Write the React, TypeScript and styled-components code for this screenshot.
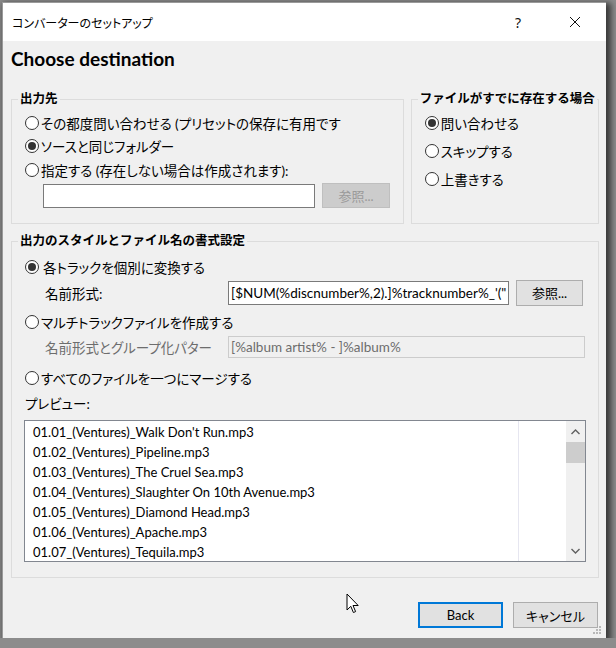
import React from 'react';
import styled, { createGlobalStyle } from 'styled-components';

const ui = `Lato, "Noto Sans CJK JP", sans-serif`;

const GlobalStyle = createGlobalStyle`
  html, body {
    margin: 0;
    padding: 0;
    background: #8c8c8c;
  }
  * {
    box-sizing: border-box;
  }
`;

const Window = styled.div`
  position: relative;
  margin: 2px 0 0 2px;
  width: 604px;
  height: 636px;
  display: flex;
  flex-direction: column;
  border-left: 1px solid #9a9a9a;
  border-top: 1px solid #9a9a9a;
  box-shadow: 3px 3px 6px 2px rgba(30, 30, 30, 0.75);
  font-family: ${ui};
  font-size: 13px;
  color: #000;
`;

const TitleBar = styled.div`
  height: 38px;
  flex: none;
  background: #fff;
  display: flex;
  align-items: center;
  padding: 0 8px 0 9px;
  font-size: 12px;
  font-feature-settings: 'palt';
`;

const Title = styled.div`
  flex: 1;
`;

const TitleButton = styled.div<{ $mr?: number }>`
  width: 46px;
  height: 38px;
  margin-right: ${(p) => p.$mr ?? 0}px;
  display: flex;
  align-items: center;
  justify-content: center;
  font-size: 14px;
  font-family: "Noto Sans", sans-serif;
  color: #111;
`;

const Body = styled.div`
  flex: 1;
  background: #f0f0f0;
  padding: 0 7px 0 8px;
  display: flex;
  flex-direction: column;
`;

const Heading = styled.h1`
  margin: 7px 0 0;
  height: 22px;
  line-height: 22px;
  font-size: 19px;
  font-weight: 700;
  font-family: Lato, sans-serif;
`;

const TopRow = styled.div`
  display: flex;
  gap: 7px;
  margin-top: 21px;
`;

const Group = styled.fieldset<{ $w?: number; $h: number; $mt?: number }>`
  margin: ${(p) => p.$mt ?? 0}px 0 0;
  padding: 0;
  width: ${(p) => (p.$w ? `${p.$w}px` : 'auto')};
  height: ${(p) => p.$h}px;
  min-width: 0;
  border: 1px solid #dcdcdc;
  display: flex;
  flex-direction: column;
`;

const Legend = styled.legend`
  margin-left: 6px;
  padding: 0 2px;
  font-size: 12.5px;
  line-height: 16px;
  font-weight: 700;
`;

const Content = styled.div<{ $pt: number }>`
  padding: ${(p) => p.$pt}px 13px 0 13px;
  display: flex;
  flex-direction: column;
  font-size: 13.5px;
  font-feature-settings: 'palt';
`;

const RadioRow = styled.label<{ $h: number; $mt?: number; $gap?: number }>`
  display: flex;
  align-items: center;
  gap: ${(p) => p.$gap ?? 2}px;
  height: ${(p) => p.$h}px;
  margin-top: ${(p) => p.$mt ?? 0}px;
  white-space: nowrap;
`;

const RadioCircle = styled.span<{ $on?: boolean }>`
  flex: none;
  width: 14px;
  height: 14px;
  border-radius: 50%;
  border: 1px solid #333;
  background: #fff;
  display: flex;
  align-items: center;
  justify-content: center;

  &::after {
    content: '';
    width: 8px;
    height: 8px;
    border-radius: 50%;
    background: ${(p) => (p.$on ? '#333' : 'transparent')};
  }
`;

const FieldRow = styled.div<{ $h: number; $mt?: number; $pl: number }>`
  display: flex;
  align-items: center;
  height: ${(p) => p.$h}px;
  margin-top: ${(p) => p.$mt ?? 0}px;
  padding-left: ${(p) => p.$pl}px;
  gap: 7px;
`;

const FieldLabel = styled.span<{ $disabled?: boolean }>`
  width: 176px;
  flex: none;
  white-space: nowrap;
  color: ${(p) => (p.$disabled ? '#6d6d6d' : '#000')};
`;

const TextBox = styled.div<{ $w?: number; $h: number; $disabled?: boolean }>`
  width: ${(p) => (p.$w ? `${p.$w}px` : 'auto')};
  flex: ${(p) => (p.$w ? 'none' : '1')};
  height: ${(p) => p.$h}px;
  border: 1px solid ${(p) => (p.$disabled ? '#cccccc' : '#7a7a7a')};
  background: ${(p) => (p.$disabled ? '#f0f0f0' : '#fff')};
  color: ${(p) => (p.$disabled ? '#6d6d6d' : '#000')};
  padding: 0 2px;
  display: flex;
  align-items: center;
  overflow: hidden;
  white-space: nowrap;
  font-family: Lato, sans-serif;
  font-size: 13.5px;
`;

const Button = styled.div<{ $w: number; $h: number; $disabled?: boolean; $focused?: boolean }>`
  width: ${(p) => p.$w}px;
  height: ${(p) => p.$h}px;
  flex: none;
  display: flex;
  align-items: center;
  justify-content: center;
  background: ${(p) => (p.$disabled ? '#cccccc' : '#e1e1e1')};
  border: ${(p) => (p.$focused ? '2px solid #0078d7' : `1px solid ${p.$disabled ? '#bfbfbf' : '#adadad'}`)};
  color: ${(p) => (p.$disabled ? '#9a9a9a' : '#000')};
  font-size: 13px;
`;

const PreviewLabel = styled.div`
  height: 16px;
  margin-top: 6px;
  line-height: 16px;
`;

const ListBox = styled.div`
  margin: 8px 0 0 -1px;
  height: 142px;
  width: 562px;
  border: 1px solid #828790;
  background: #fff;
  display: flex;
`;

const ListItems = styled.div`
  width: 494px;
  border-right: 1px solid #e6e6f0;
  padding: 1px 0 0 8px;
  overflow: hidden;
`;

const ListItem = styled.div`
  height: 20px;
  line-height: 20px;
  font-family: Lato, sans-serif;
  font-size: 13px;
  white-space: nowrap;
`;

const ListSpacer = styled.div`
  flex: 1;
`;

const ScrollBar = styled.div`
  width: 19px;
  background: #f0f0f0;
  display: flex;
  flex-direction: column;
  align-items: center;
`;

const ScrollArrow = styled.div`
  height: 21px;
  width: 100%;
  display: flex;
  align-items: center;
  justify-content: center;
`;

const ScrollThumb = styled.div`
  width: 100%;
  height: 21px;
  background: #cdcdcd;
`;

const ScrollTrack = styled.div`
  flex: 1;
`;

const Footer = styled.div`
  margin-top: 24px;
  display: flex;
  justify-content: flex-end;
  gap: 10px;
  padding-right: 1px;
  font-feature-settings: 'palt';
`;

const Cursor = styled.svg`
  position: absolute;
  left: 343px;
  top: 590px;
`;

const Grip = styled.svg`
  position: absolute;
  right: 5px;
  bottom: 4px;
`;

const tracks = [
  "01.01_(Ventures)_Walk Don't Run.mp3",
  '01.02_(Ventures)_Pipeline.mp3',
  '01.03_(Ventures)_The Cruel Sea.mp3',
  '01.04_(Ventures)_Slaughter On 10th Avenue.mp3',
  '01.05_(Ventures)_Diamond Head.mp3',
  '01.06_(Ventures)_Apache.mp3',
  '01.07_(Ventures)_Tequila.mp3',
];

const Radio: React.FC<{ on?: boolean; h: number; mt?: number; gap?: number; children: React.ReactNode }> = ({
  on,
  h,
  mt,
  gap,
  children,
}) => (
  <RadioRow $h={h} $mt={mt} $gap={gap}>
    <RadioCircle $on={on} />
    <span>{children}</span>
  </RadioRow>
);

const App: React.FC = () => {
  return (
    <>
      <GlobalStyle />
      <Window>
        <TitleBar>
          <Title>コンバーターのセットアップ</Title>
          <TitleButton $mr={11}>?</TitleButton>
          <TitleButton>
            <svg width="12" height="12" viewBox="0 0 12 12">
              <path d="M1 1 L11 11 M11 1 L1 11" stroke="#111" strokeWidth="1" />
            </svg>
          </TitleButton>
        </TitleBar>

        <Body>
          <Heading>Choose destination</Heading>

          <TopRow>
            <Group $w={394} $h={133}>
              <Legend>出力先</Legend>
              <Content $pt={4}>
                <Radio h={23}>その都度問い合わせる (プリセットの保存に有用です</Radio>
                <Radio h={24} on>
                  ソースと同じフォルダー
                </Radio>
                <Radio h={24}>指定する (存在しない場合は作成されます):</Radio>
                <FieldRow $h={27} $pl={18}>
                  <TextBox $w={272} $h={24} />
                  <Button $w={68} $h={25} $disabled>
                    参照...
                  </Button>
                </FieldRow>
              </Content>
            </Group>

            <Group $w={189} $h={133}>
              <Legend>ファイルがすでに存在する場合</Legend>
              <Content $pt={2}>
                <Radio h={28} on>
                  問い合わせる
                </Radio>
                <Radio h={28}>スキップする</Radio>
                <Radio h={28}>上書きする</Radio>
              </Content>
            </Group>
          </TopRow>

          <Group $h={345} $mt={9}>
            <Legend>出力のスタイルとファイル名の書式設定</Legend>
            <Content $pt={6}>
              <Radio h={24} on gap={4}>
                各トラックを個別に変換する
              </Radio>
              <FieldRow $h={27} $pl={20}>
                <FieldLabel>名前形式:</FieldLabel>
                <TextBox $w={281} $h={24}>
                  [$NUM(%discnumber%,2).]%tracknumber%_'("
                </TextBox>
                <Button $w={67} $h={26}>
                  参照...
                </Button>
              </FieldRow>
              <Radio h={24} mt={4}>
                マルチトラックファイルを作成する
              </Radio>
              <FieldRow $h={22} $mt={2} $pl={20}>
                <FieldLabel $disabled>名前形式とグループ化パター</FieldLabel>
                <TextBox $w={357} $h={22} $disabled>
                  [%album artist% - ]%album%
                </TextBox>
              </FieldRow>
              <Radio h={24} mt={8}>
                すべてのファイルを一つにマージする
              </Radio>
              <PreviewLabel>プレビュー:</PreviewLabel>
              <ListBox>
                <ListItems>
                  {tracks.map((t) => (
                    <ListItem key={t}>{t}</ListItem>
                  ))}
                </ListItems>
                <ListSpacer />
                <ScrollBar>
                  <ScrollArrow>
                    <svg width="9" height="6" viewBox="0 0 9 6">
                      <path d="M0.5 5 L4.5 1 L8.5 5" fill="none" stroke="#606060" strokeWidth="1.4" />
                    </svg>
                  </ScrollArrow>
                  <ScrollThumb />
                  <ScrollTrack />
                  <ScrollArrow>
                    <svg width="9" height="6" viewBox="0 0 9 6">
                      <path d="M0.5 1 L4.5 5 L8.5 1" fill="none" stroke="#606060" strokeWidth="1.4" />
                    </svg>
                  </ScrollArrow>
                </ScrollBar>
              </ListBox>
            </Content>
          </Group>

          <Footer>
            <Button $w={85} $h={26} $focused>
              Back
            </Button>
            <Button $w={85} $h={26}>
              キャンセル
            </Button>
          </Footer>
        </Body>

        <Cursor width="14" height="22" viewBox="0 0 14 22">
          <path
            d="M1 1 L1 17 L4.8 13.3 L7.4 19.5 L9.6 18.6 L7 12.5 L12.2 12.5 Z"
            fill="#fff"
            stroke="#000"
            strokeWidth="1"
            strokeLinejoin="miter"
          />
        </Cursor>

        <Grip width="9" height="9" viewBox="0 0 9 9">
          <rect x="7" y="1" width="2" height="2" fill="#b8b8b8" />
          <rect x="4" y="4" width="2" height="2" fill="#b8b8b8" />
          <rect x="7" y="4" width="2" height="2" fill="#b8b8b8" />
          <rect x="1" y="7" width="2" height="2" fill="#b8b8b8" />
          <rect x="4" y="7" width="2" height="2" fill="#b8b8b8" />
          <rect x="7" y="7" width="2" height="2" fill="#b8b8b8" />
        </Grip>
      </Window>
    </>
  );
};

export default App;
